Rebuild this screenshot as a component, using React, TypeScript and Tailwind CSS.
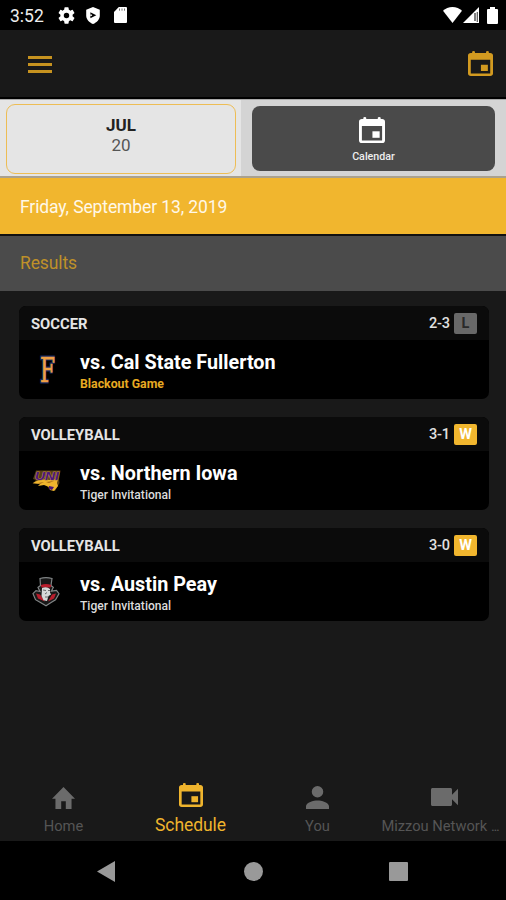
import React from 'react';

function CalendarIcon({ className }: { className: string }) {
  return (
    <svg viewBox="3 1 18 20" preserveAspectRatio="none" fill="currentColor" className={className}>
      <path d="M19 2.600h-1V1.500q-.1-.5-1-.5t-1 .5v1.100H8V1.500Q7.900 1 7 1t-1 .5v1.100H5c-1.200 0-2 .8-2 2V19c0 1.200.8 2 2 2h14c1.200 0 2-.8 2-2V4.600c0-1.200-.8-2-2-2zm0 16.400H5V8h14v11z" />
      <path d="M17.300 12h-5v5h5z" />
    </svg>
  );
}

function StatusBar() {
  return (
    <div className="flex h-[30px] shrink-0 items-center bg-black text-white">
      <span className="ml-[10px] mt-[2px] w-[48px] text-[17.500px] leading-[20px] text-[#eee]">3:52</span>
      <svg viewBox="2 2 20 20" fill="currentColor" className="h-[17px] w-[17px]">
        <path d="M19.14 12.94c.04-.3.06-.61.06-.94s-.02-.64-.07-.94l2.03-1.58a.49.49 0 0 0 .12-.61l-1.92-3.32a.49.49 0 0 0-.59-.22l-2.39.96a7 7 0 0 0-1.62-.94l-.36-2.54A.48.48 0 0 0 13.92 2.4h-3.84a.47.47 0 0 0-.47.41l-.36 2.54c-.59.24-1.13.57-1.62.94l-2.39-.96a.47.47 0 0 0-.59.22L2.74 8.87a.48.48 0 0 0 .12.61l2.03 1.58a7.8 7.8 0 0 0 0 1.88l-2.03 1.58a.49.49 0 0 0-.12.61l1.92 3.32c.12.22.37.29.59.22l2.39-.96c.5.38 1.03.7 1.62.94l.36 2.54c.05.24.24.41.48.41h3.84c.24 0 .44-.17.47-.41l.36-2.54c.59-.24 1.13-.56 1.62-.94l2.39.96c.22.08.47 0 .59-.22l1.92-3.32a.47.47 0 0 0-.12-.61zM12 15.2a3.2 3.2 0 1 1 0-6.4 3.2 3.2 0 0 1 0 6.4z" />
      </svg>
      <svg viewBox="0 0 16 18" className="ml-[10px] h-[17px] w-[16px]">
        <path fill="white" d="M8 0 .8 3v6c0 4 3.200 7.500 7.200 9 4-1.500 7.200-5 7.200-9V3z" />
        <path fill="black" d="M5.200 5.500v6.400L11.500 8.700z" />
        <path fill="white" d="M5 8h2v1.400H5z" />
      </svg>
      <svg viewBox="0 0 13 16" className="ml-[13px] h-[16px] w-[13px]">
        <path fill="white" d="M4.8 0H12a1 1 0 0 1 1 1v14a1 1 0 0 1-1 1H1a1 1 0 0 1-1-1V5z" />
        <path stroke="#777" strokeWidth="1" d="M5.500 1.500v2.200M8 1.500v2.200M10.500 1.500v2.200" />
      </svg>
      <svg viewBox="0 0 19 16" className="ml-auto h-[16px] w-[19px]">
        <path fill="white" d="M9.5 0C5.8 0 2.400 1.500 0 3.800L9.500 16 19 3.800C16.600 1.500 13.200 0 9.500 0z" />
      </svg>
      <svg viewBox="0 0 16 16" className="ml-[1px] h-[16px] w-[16px]">
        <path fill="white" d="M0 16 16 0v16z" />
        <path fill="black" d="M11.500 6h1v8h-1zM13.800 5h.8v10h-.8z" />
      </svg>
      <svg viewBox="0 0 11 17" className="ml-[8px] mr-[8px] h-[17px] w-[11px]">
        <path fill="white" d="M3 0h5v2h2a1 1 0 0 1 1 1v13a1 1 0 0 1-1 1H1a1 1 0 0 1-1-1V3a1 1 0 0 1 1-1h2z" />
      </svg>
    </div>
  );
}

function FullertonLogo() {
  return (
    <svg viewBox="0 0 30 30" className="h-[30px] w-[30px] overflow-visible">
      <text x="9" y="27" textLength="15" lengthAdjust="spacingAndGlyphs" fontFamily="DejaVu Serif, serif" fontSize="33" fill="none" stroke="#172b63" strokeWidth="2.800">F</text>
      <text x="9" y="27" textLength="15" lengthAdjust="spacingAndGlyphs" fontFamily="DejaVu Serif, serif" fontSize="33" fill="#f0a044" stroke="#f0a044" strokeWidth=".7">F</text>
    </svg>
  );
}

function NorthernIowaLogo() {
  return (
    <svg viewBox="0 0 30 30" className="h-[30px] w-[30px] overflow-visible">
      <path d="M5 4.500 29.500 4.500 28 13 28.500 17 24 25 18 23 15 18 1.500 18 5 14 2 13z" fill="#594014" />
      <path d="M2 17c5-4 12-4 17-3l8-1-1 4 1 3-4 5-4-1-1-3-5-2-6 1 2-2z" fill="#efb52d" />
      <path d="M15 16l8-1-5 2zM7 17l6-1-4 2z" fill="#a66a17" />
      <path d="M18 20l5 1-2 3-3-1z" fill="#4a1976" />
      <text x="4" y="13.500" textLength="24" lengthAdjust="spacingAndGlyphs" fontFamily="Liberation Sans, sans-serif" fontWeight="700" fontStyle="italic" fontSize="11.500" fill="#4b167f" stroke="#b88740" strokeWidth=".9" paintOrder="stroke">UNI</text>
    </svg>
  );
}

function AustinPeayLogo() {
  return (
    <svg viewBox="0 0 30 30" className="h-[30px] w-[30px]">
      <path d="M9 1.500q6-1.600 12 0l-1 7 2.300 2-2 3.700 5.200-.7 2.500 3.200-3.500 6-4 2.500-5.500 3.500-6-3.500-4.500-2.500L2 16.700l3-3 4 .8-2-4 2.500-2z" fill="#181818" stroke="#818586" strokeWidth="1.200" />
      <path d="M9.800 8q5-2 10.500 0l-.8 2.500h-9zM5 16.500l4 1 5 7-7-3zM25 16.500l-4 1-4 7 6-3z" fill="#b81d2c" />
      <path d="M11 11q5-2 8 1v3.500l1 2-2.500 1.500-1.500 5-3.500-.7-2-4.300z" fill="#d5d8d8" />
      <path d="M12 13l3 .5M17 13.500h2M14 17l2-1.500M14 20h3" stroke="#4b4b4b" strokeWidth=".8" />
    </svg>
  );
}

type Game = { sport: string; score: string; result: 'W' | 'L'; opponent: string; note: string; logo: React.ReactNode };

const games: Game[] = [
  { sport: 'SOCCER', score: '2-3', result: 'L', opponent: 'Cal State Fullerton', note: 'Blackout Game', logo: <FullertonLogo /> },
  { sport: 'VOLLEYBALL', score: '3-1', result: 'W', opponent: 'Northern Iowa', note: 'Tiger Invitational', logo: <NorthernIowaLogo /> },
  { sport: 'VOLLEYBALL', score: '3-0', result: 'W', opponent: 'Austin Peay', note: 'Tiger Invitational', logo: <AustinPeayLogo /> },
];

function GameCard({ game }: { game: Game }) {
  const won = game.result === 'W';
  return (
    <article className="h-[93px] overflow-hidden rounded-[7px] bg-black">
      <div className="flex h-[34px] items-center bg-[#0b0b0b] pl-3 pr-3">
        <h2 className="mt-px text-[14.800px] font-bold leading-[18px] text-[#e5e5e5]">{game.sport}</h2>
        <div className="ml-auto flex items-center">
          <span className="mt-px w-[25px] text-[14.500px] font-medium leading-[20px] tracking-[-0.200px] text-[#e0e0e0]">{game.score}</span>
          <span className={`mt-px flex h-[21px] w-[23px] items-center justify-center rounded-[2px] pt-px text-[14.500px] font-bold ${won ? 'bg-[#f1b62e] text-white' : 'bg-[#686868] text-[#292929]'}`}>{game.result}</span>
        </div>
      </div>
      <div className="flex">
        <div className="ml-3 mt-[15px] w-[49px]">{game.logo}</div>
        <div className="pt-[11px]">
          <h3 className="text-[19.800px] font-bold leading-[24px] text-white">vs. {game.opponent}</h3>
          <p className={`mt-px leading-[16px] ${won ? 'text-[12.100px] font-medium text-[#dcdcdc]' : 'text-[12.300px] font-bold text-[#e7aa22]'}`}>{game.note}</p>
        </div>
      </div>
    </article>
  );
}

export default function App() {
  return (
    <div className="flex h-[900px] w-[506px] flex-col overflow-hidden bg-[#191919] font-[Roboto,sans-serif]">
      <StatusBar />
      <header className="flex h-[69px] shrink-0 items-center justify-between border-b-2 border-black pl-[28px] pr-[13px]">
        <div className="mt-[2px] flex w-6 flex-col gap-[4px]">
          <i className="h-[3px] bg-[#c6921f]" />
          <i className="h-[3px] bg-[#c6921f]" />
          <i className="h-[3px] bg-[#c6921f]" />
        </div>
        <CalendarIcon className="h-[25px] w-[25px] text-[#d29a20]" />
      </header>
      <div className="flex h-[79px] shrink-0 border-b-2 border-t border-b-[#aaa18e] border-t-[#aaa] bg-[#d4d4d4]">
        <div className="w-[241px] bg-[#e5e5e5] pl-[6px] pt-[4px]">
          <div className="flex h-[70px] w-[230px] flex-col items-center rounded-[9px] border border-[#edbd55] pt-[10px]">
            <b className="text-[17px] leading-[20px] text-[#222]">JUL</b>
            <span className="text-[17px] leading-[20px] text-[#555]">20</span>
          </div>
        </div>
        <div className="ml-[11px] mt-[6px] flex h-[65px] w-[243px] flex-col items-center rounded-[8px] bg-[#4a4a4a] pt-[11px] text-white">
          <CalendarIcon className="mr-[4px] h-[26px] w-[26px]" />
          <span className="mt-[7px] text-[10.700px] font-medium leading-[14px] text-[#eee]">Calendar</span>
        </div>
      </div>
      <div className="h-[58px] shrink-0 border-b-2 border-[#111] bg-[#f1b62e] pl-[20px] pt-[19px] text-[17.500px] leading-[21px] tracking-[-0.110px] text-[#fff8e8]">Friday, September 13, 2019</div>
      <div className="h-[55px] shrink-0 bg-[#4b4b4b] pl-[20px] pt-[17px] text-[17.500px] leading-[21px] tracking-[-0.100px] text-[#bf9129]">Results</div>
      <main className="flex flex-1 flex-col gap-[18px] pl-[19px] pr-[17px] pt-[15px]">
        {games.map((game) => <GameCard key={game.opponent} game={game} />)}
      </main>
      <nav className="grid h-[71px] shrink-0 grid-cols-[127px_127px_127px_125px] text-[14.700px] leading-[18px] text-[#555]">
        <div className="flex flex-col items-center pt-[17px]">
          <svg viewBox="2 3 20 17" preserveAspectRatio="none" className="h-[22px] w-[23px] fill-[#6b6b6b]"><path d="M10 20v-6h4v6h5v-8h3L12 3 2 12h3v8z" /></svg>
          <span className="mt-[8px]">Home</span>
        </div>
        <div className="flex flex-col items-center pt-[13px] text-[#efb42d]">
          <CalendarIcon className="h-[24px] w-[24px]" />
          <span className="mt-[8px] text-[17.500px] leading-[20px] tracking-[-0.080px]">Schedule</span>
        </div>
        <div className="flex flex-col items-center pt-[16px]">
          <svg viewBox="4 4 16 16" className="h-[23px] w-[23px] fill-[#6b6b6b]"><path d="M12 12a4 4 0 1 0 0-8 4 4 0 0 0 0 8zm0 2c-2.670 0-8 1.340-8 4v2h16v-2c0-2.660-5.330-4-8-4z" /></svg>
          <span className="mt-[8px]">You</span>
        </div>
        <div className="flex flex-col items-center pt-[18px]">
          <svg viewBox="3 6 18 12" preserveAspectRatio="none" className="ml-px h-[18px] w-[27px] fill-[#6b6b6b]"><path d="M17 10.500V7c0-.55-.45-1-1-1H4c-.55 0-1 .45-1 1v10c0 .55.45 1 1 1h12c.55 0 1-.45 1-1v-3.500l4 4v-11z" /></svg>
          <span className="mr-[7px] mt-[11px] whitespace-nowrap">Mizzou Network <span className="tracking-[-1.300px]">...</span></span>
        </div>
      </nav>
      <footer className="flex h-[59px] shrink-0 items-center bg-black pl-[97px] pt-px">
        <svg viewBox="0 0 18 21" className="h-[21px] w-[18px] fill-[#999]"><path d="M18 0v21L0 10.500z" /></svg>
        <div className="ml-[129px] h-[19px] w-[19px] rounded-full bg-[#999]" />
        <div className="ml-[126px] h-[19px] w-[19px] rounded-[1px] bg-[#999]" />
      </footer>
    </div>
  );
}
